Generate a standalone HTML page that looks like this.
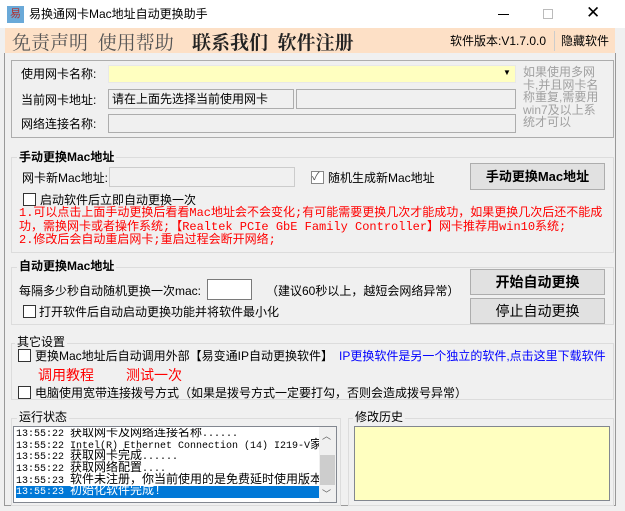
<!DOCTYPE html>
<html><head><meta charset="utf-8"><style>
*{margin:0;padding:0;box-sizing:border-box}
body{width:625px;height:511px;background:#f0f0f0;font-family:"Liberation Sans","Noto Sans CJK SC",sans-serif;font-size:12px;line-height:14px;color:#000;position:relative;overflow:hidden}
.a{position:absolute;white-space:nowrap}
.box{position:absolute;border:1px solid #adadad;background:#f0f0f0}
.grp{position:absolute;border:1px solid #dcdcdc}
.lg{position:absolute;background:#f0f0f0;padding:0 2px;font-size:12px;white-space:nowrap}
.cb{position:absolute;width:13px;height:13px;border:1px solid #333;background:#fff}
.btn{position:absolute;border:1px solid #adadad;background:#e1e1e1;display:flex;align-items:center;justify-content:center;font-size:13px}
.mono{font-family:"Liberation Mono","Noto Sans CJK SC",monospace}
.ln{height:11.7px;line-height:11.7px;overflow:visible;white-space:nowrap}
.ln i{font-style:normal;font-size:10px}
.rl{height:13.5px;line-height:13.5px;white-space:nowrap}
</style></head><body>
<div class="a" style="left:0;top:0;width:625px;height:28px;background:#fff"></div>
<div class="a" style="left:7px;top:6px;width:17px;height:17px;background:#6aa9d8;color:#b03030;font-size:11px;text-align:center;line-height:17px">易</div>
<div class="a" style="left:29px;top:7px;font-size:12px">易换通网卡Mac地址自动更换助手</div>
<div class="a" style="left:498px;top:14px;width:11px;height:1px;background:#000"></div>
<div class="a" style="left:543px;top:9px;width:10px;height:10px;border:1px solid #bbb"></div>
<div class="a" style="left:586px;top:6px;font-size:17px;font-weight:300">✕</div>
<div class="a" style="left:5px;top:28px;width:610px;height:25px;background:#fde0c6"></div>
<div class="a" style="left:12px;top:31px;font-size:19px;line-height:22px;color:#555;font-family:'Noto Serif CJK SC',serif">免责声明&nbsp;&nbsp;使用帮助</div>
<div class="a" style="left:192px;top:31px;font-size:19px;line-height:22px;font-weight:bold;color:#222;font-family:'Noto Serif CJK SC',serif">联系我们&nbsp;&nbsp;软件注册</div>
<div class="a" style="left:450px;top:34px;font-size:12px">软件版本:V1.7.0.0</div>
<div class="a" style="left:554px;top:31px;width:1px;height:20px;background:#ccc"></div>
<div class="a" style="left:561px;top:34px;font-size:12px">隐藏软件</div>
<div class="a" style="left:4px;top:53px;width:612px;height:453px;border:1px solid #999;border-top:none"></div>
<div class="grp" style="left:11px;top:60px;width:603px;height:78px;border-color:#adadad"></div>
<div class="a" style="left:21px;top:67px">使用网卡名称:</div>
<div class="a" style="left:108px;top:65px;width:408px;height:18px;background:#ffffc0;border:1px solid #e8e8e8"></div>
<div class="a" style="left:503px;top:68px;font-size:8px;line-height:10px">▼</div>
<div class="a" style="left:21px;top:93px">当前网卡地址:</div>
<div class="box" style="left:108px;top:89px;width:186px;height:20px;padding:2px 3px">请在上面先选择当前使用网卡</div>
<div class="box" style="left:296px;top:89px;width:220px;height:20px"></div>
<div class="a" style="left:21px;top:117px">网络连接名称:</div>
<div class="box" style="left:108px;top:114px;width:408px;height:19px"></div>
<div class="a" style="left:523px;top:66px;color:#a0a0a0;font-size:12px;line-height:12.5px;white-space:normal;width:84px">如果使用多网卡,并且网卡名称重复,需要用win7及以上系统才可以</div>

<div class="grp" style="left:11px;top:157px;width:603px;height:96px"></div>
<div class="lg" style="left:17px;top:150px;font-weight:bold">手动更换Mac地址</div>
<div class="a" style="left:22px;top:171px">网卡新Mac地址:</div>
<div class="box" style="left:109px;top:167px;width:186px;height:20px;border-color:#ccc"></div>
<div class="cb" style="left:311px;top:171px;border-color:#888;font-size:11px;line-height:11px;color:#555">✓</div>
<div class="a" style="left:328px;top:171px">随机生成新Mac地址</div>
<div class="btn" style="left:470px;top:163px;width:135px;height:27px;font-weight:bold">手动更换Mac地址</div>
<div class="cb" style="left:23px;top:193px"></div>
<div class="a" style="left:40px;top:193px">启动软件后立即自动更换一次</div>
<div class="a mono" style="left:19px;top:207px;color:#f00;font-size:12px">
<div class="rl">1.可以点击上面手动更换后看看Mac地址会不会变化;有可能需要更换几次才能成功，如果更换几次后还不能成</div>
<div class="rl">功，需换网卡或者操作系统;【Realtek PCIe GbE Family Controller】网卡推荐用win10系统;</div>
<div class="rl">2.修改后会自动重启网卡;重启过程会断开网络;</div></div>

<div class="grp" style="left:11px;top:267px;width:603px;height:58px"></div>
<div class="lg" style="left:17px;top:259px;font-weight:bold">自动更换Mac地址</div>
<div class="a" style="left:19px;top:284px">每隔多少秒自动随机更换一次mac:</div>
<div class="a" style="left:207px;top:279px;width:45px;height:21px;background:#fff;border:1px solid #7a7a7a"></div>
<div class="a" style="left:266px;top:284px">（建议60秒以上，越短会网络异常）</div>
<div class="btn" style="left:470px;top:269px;width:135px;height:26px;font-size:14px;font-weight:bold">开始自动更换</div>
<div class="btn" style="left:470px;top:298px;width:135px;height:26px;font-size:14px">停止自动更换</div>
<div class="cb" style="left:23px;top:305px"></div>
<div class="a" style="left:39px;top:305px">打开软件后自动启动更换功能并将软件最小化</div>

<div class="grp" style="left:11px;top:343px;width:603px;height:57px"></div>
<div class="lg" style="left:15px;top:335px">其它设置</div>
<div class="cb" style="left:18px;top:349px"></div>
<div class="a" style="left:35px;top:349px">更换Mac地址后自动调用外部【易变通IP自动更换软件】</div>
<div class="a" style="left:339px;top:349px;color:#00f">IP更换软件是另一个独立的软件,点击这里下载软件</div>
<div class="a" style="left:38px;top:367px;color:#f00;font-size:14px;line-height:16px">调用教程</div>
<div class="a" style="left:126px;top:367px;color:#f00;font-size:14px;line-height:16px">测试一次</div>
<div class="cb" style="left:18px;top:386px"></div>
<div class="a" style="left:35px;top:386px">电脑使用宽带连接拨号方式（如果是拨号方式一定要打勾，否则会造成拨号异常）</div>

<div class="grp" style="left:11px;top:418px;width:330px;height:88px"></div>
<div class="lg" style="left:17px;top:410px">运行状态</div>
<div class="a" style="left:13px;top:426px;width:324px;height:77px;background:#fff;border:1px solid #828790;overflow:hidden">
<div class="mono" style="position:absolute;left:2px;top:1px;font-size:12px;width:304px;overflow:hidden">
<div class="ln"><i>13:55:22 </i>获取网卡及网络连接名称<i>......</i></div>
<div class="ln"><i>13:55:22 Intel(R) Ethernet Connection (14) I219-V</i>家</div>
<div class="ln"><i>13:55:22 </i>获取网卡完成<i>......</i></div>
<div class="ln"><i>13:55:22 </i>获取网络配置<i>....</i></div>
<div class="ln"><i>13:55:23 </i>软件未注册，你当前使用的是免费延时使用版本</div>
<div class="ln" style="background:#0078d7;color:#fff"><i>13:55:23 </i>初始化软件完成!</div></div>
<div style="position:absolute;left:305px;top:0;width:17px;height:75px;background:#f0f0f0"></div>
<div style="position:absolute;left:306px;top:28px;width:15px;height:30px;background:#cdcdcd"></div>
<div style="position:absolute;left:308px;top:4px;font-size:9px;line-height:10px;color:#606060">︿</div>
<div style="position:absolute;left:308px;top:62px;font-size:9px;line-height:10px;color:#606060">﹀</div>
</div>
<div class="grp" style="left:348px;top:418px;width:266px;height:88px"></div>
<div class="lg" style="left:353px;top:410px">修改历史</div>
<div class="a" style="left:354px;top:426px;width:256px;height:75px;background:#ffffc0;border:1px solid #828790"></div>
</body></html>
